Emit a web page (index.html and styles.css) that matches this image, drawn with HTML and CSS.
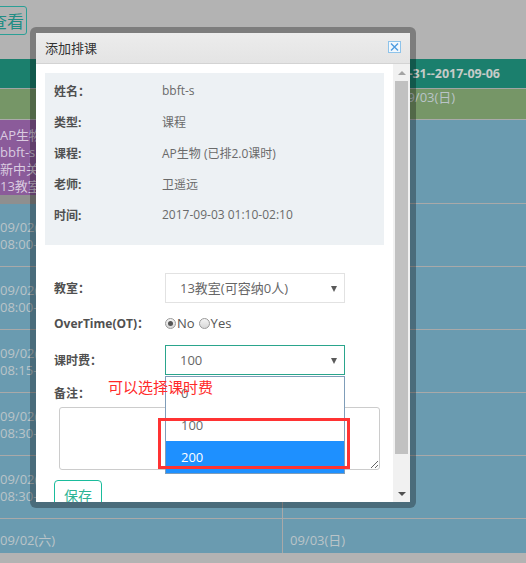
FILE: index.html
```html
<!DOCTYPE html>
<html>
<head>
<meta charset="utf-8">
<link rel="stylesheet" href="styles.css">
</head>
<body>
<div class="page">
  <div class="toolbar"><button class="btn-view">查看</button></div>
  <div class="table">
    <div class="row head"><div class="range">2017-08-31--2017-09-06</div></div>
    <div class="row days"><div class="cell"></div><div class="cell day">09/03(日)</div></div>
    <div class="row r1">
      <div class="cell left">
        <div class="event"><span class="clip">AP生物</span><span class="clip">bbft-s同学</span><span class="clip">新中关村校区</span><span class="clip">13教室</span></div>
      </div>
      <div class="cell right"></div>
    </div>
    <div class="row r"><div class="cell left"><span class="clip">09/02(六)</span><span class="clip">08:00-09:00</span></div><div class="cell right"></div></div>
    <div class="row r"><div class="cell left"><span class="clip">09/02(六)</span><span class="clip">08:00-10:00</span></div><div class="cell right"></div></div>
    <div class="row r"><div class="cell left"><span class="clip">09/02(六)</span><span class="clip">08:15-09:15</span></div><div class="cell right"></div></div>
    <div class="row r"><div class="cell left"><span class="clip">09/02(六)</span><span class="clip">08:30-09:30</span></div><div class="cell right"></div></div>
    <div class="row r"><div class="cell left"><span class="clip">09/02(六)</span><span class="clip">08:30-10:30</span></div><div class="cell right"></div></div>
    <div class="row rl"><div class="cell left">09/02(六)</div><div class="cell right">09/03(日)</div></div>
  </div>
</div>

<div class="modal">
  <div class="modal-title">
    <span>添加排课</span>
    <span class="close"><svg width="9" height="8" viewBox="0 0 9 8"><path d="M1 0.5L8 7.5M8 0.5L1 7.5" stroke="#4d9be0" stroke-width="1.4" fill="none"/></svg></span>
  </div>
  <div class="modal-body">
    <div class="content">
      <div class="info">
        <div class="info-row"><span class="lbl">姓名：</span><span class="val">bbft-s</span></div>
        <div class="info-row"><span class="lbl">类型:</span><span class="val">课程</span></div>
        <div class="info-row"><span class="lbl">课程:</span><span class="val">AP生物 (已排2.0课时)</span></div>
        <div class="info-row"><span class="lbl">老师:</span><span class="val">卫遥远</span></div>
        <div class="info-row"><span class="lbl">时间:</span><span class="val">2017-09-03 01:10-02:10</span></div>
      </div>
      <div class="form">
        <div class="f-row sel-row"><span class="lbl flbl">教室：</span><div class="select">13教室(可容纳0人)<i class="arrow"></i></div></div>
        <div class="f-row ot-row"><span class="lbl flbl">OverTime(OT)：</span>
          <span class="radio on"></span><span class="rtxt">No</span><span class="radio"></span><span class="rtxt">Yes</span>
        </div>
        <div class="f-row sel-row fee"><span class="lbl flbl">课时费：</span>
          <div class="select focus">100<i class="arrow"></i>
            <div class="dropdown">
              <div class="opt">0</div>
              <div class="opt">100</div>
              <div class="opt hl">200</div>
            </div>
          </div>
        </div>
        <div class="f-row note-row"><span class="lbl flbl">备注：</span></div>
        <textarea class="note"></textarea>
        <button class="save">保存</button>
      </div>
      <div class="annot">可以选择课时费</div>
      <div class="redbox"></div>
    </div>
    <div class="scrollbar">
      <div class="sb-btn"><i class="tri-up"></i></div>
      <div class="sb-track"><div class="sb-thumb"></div></div>
      <div class="sb-btn"><i class="tri-down"></i></div>
    </div>
  </div>
</div>
</body>
</html>
```

FILE: styles.css
```css
* { box-sizing: border-box; }
html, body { margin: 0; padding: 0; }
body {
  width: 526px;
  height: 563px;
  overflow: hidden;
  background: #b3b3b3;
  font-family: "Open Sans", "Noto Sans CJK SC", sans-serif;
  position: relative;
}

/* background page */
.toolbar { height: 59px; padding-top: 6px; }
.btn-view {
  margin-left: -13px;
  height: 29px;
  padding: 0 2px;
  border: 1px solid #2a9f96;
  border-radius: 3px;
  background: transparent;
  color: #1f8d84;
  font: 17px/27px "Noto Sans CJK SC", sans-serif;
}
.table { height: 494px; overflow: hidden; }
.row { display: grid; grid-template-columns: 282px 1fr; }
.head {
  display: block;
  height: 30px;
  background: #1b7f6d;
  border-bottom: 1px solid #a0a6a4;
}
.range {
  text-align: right;
  padding-right: 26px;
  font-weight: bold;
  font-size: 12.5px;
  line-height: 29px;
  color: #c6cbc8;
}
.days {
  height: 31px;
  background: #769667;
  border-bottom: 1px solid #aaaaaa;
}
.day {
  padding-left: 118px;
  font-size: 14px;
  line-height: 34px;
  color: #2e3a2b;
}
.cell { font-size: 13px; line-height: 17px; color: #bac4c8; }
.clip { display: block; width: 36px; overflow: hidden; white-space: nowrap; }
.r1 { height: 84px; }
.r1 .left { background: #8f8f8f; }
.r1 .right { background: #6a9bb0; border-left: 1px solid #a9a9a9; border-bottom: 1px solid #a9a9a9; }
.event {
  height: 75px;
  background: #8b5b9a;
  color: #dacbe0;
  padding-top: 7px;
}
.r, .rl { background: #6a9bb0; }
.r { height: 63px; }
.r .cell, .rl .cell { white-space: nowrap; overflow: hidden; }
.r .left { padding-top: 15px; border-bottom: 1px solid #a9a9a9; }
.r .right { border-left: 1px solid #a9a9a9; border-bottom: 1px solid #a9a9a9; }
.rl { height: 34px; }
.rl .left { padding-top: 13px; }
.rl .right { padding-top: 13px; padding-left: 7px; border-left: 1px solid #a9a9a9; }

/* modal */
.modal {
  position: absolute;
  left: 30px;
  top: 27px;
  width: 386px;
  height: 481px;
  border: 6px solid rgba(0, 0, 0, 0.3);
  border-radius: 6px;
  background: #fff;
  background-clip: padding-box;
  display: flex;
  flex-direction: column;
}
.modal-title {
  flex: none;
  height: 31px;
  background: linear-gradient(#ececec, #e4e4e4);
  border-bottom: 1px solid #d3d3d3;
  display: flex;
  align-items: center;
  justify-content: space-between;
  padding: 0 9px 0 9px;
  font-size: 13px;
  color: #333;
}
.modal-title span:first-child { margin-top: -2px; }
.close {
  width: 13px;
  height: 12px;
  border: 1px solid #8ec3ea;
  background: #f2f8fd;
  display: flex;
  align-items: center;
  justify-content: center;
  margin-top: -3px;
}
.close svg { display: block; }
.modal-body { flex: 1; display: flex; overflow: hidden; }
.content {
  flex: 1;
  padding: 9px 9px 0 9px;
  overflow: hidden;
  position: relative;
}

.info {
  background: #edf1f4;
  padding: 2px 9px 15px;
}
.info-row { height: 31px; display: flex; align-items: center; }
.lbl { font-weight: bold; font-size: 12px; color: #505050; }
.info .lbl { width: 108px; }
.val { font-size: 12px; color: #6a6a6a; }

.form { padding: 28px 0 0 9px; }
.f-row { display: flex; align-items: center; }
.flbl { width: 111px; }
.sel-row { height: 30px; margin-bottom: 10px; }
.ot-row { height: 20px; margin-bottom: 12px; }
.fee { margin-bottom: 8px; }
.select {
  position: relative;
  width: 180px;
  height: 30px;
  border: 1px solid #e2e2e2;
  padding-left: 14px;
  font-size: 13px;
  line-height: 28px;
  color: #666;
}
.select.focus { border-color: #2aa58c; }
.arrow {
  position: absolute;
  right: 7px;
  top: 12px;
  width: 0;
  height: 0;
  border-left: 3.5px solid transparent;
  border-right: 3.5px solid transparent;
  border-top: 6px solid #5a5a5a;
}
.radio {
  width: 11px;
  height: 11px;
  border-radius: 50%;
  border: 1px solid #9a9a9a;
  background: linear-gradient(#f4f4f4, #d8d8d8);
  position: relative;
}
.radio.on::after {
  content: "";
  position: absolute;
  left: 2px;
  top: 2px;
  width: 5px;
  height: 5px;
  border-radius: 50%;
  background: #555;
}
.rtxt { font-size: 13px; color: #555; margin: 0 4px 0 1px; }
.note-row { height: 20px; }
.note {
  display: block;
  margin: 4px 0 0 5px;
  width: 321px;
  height: 63px;
  border: 1px solid #cccccc;
  border-radius: 3px;
  resize: both;
  background: #fff;
}
.save {
  display: block;
  margin-top: 10px;
  width: 48px;
  height: 30px;
  border: 1px solid #1abc9c;
  border-radius: 4px;
  background: #fff;
  color: #2db395;
  font: 14px/28px "Noto Sans CJK SC", sans-serif;
  padding: 0;
}

.dropdown {
  position: absolute;
  left: -1px;
  top: 30px;
  width: 180px;
  border: 1px solid #7f9db9;
  background: #fff;
  z-index: 2;
}
.opt {
  height: 32px;
  line-height: 32px;
  padding-left: 15px;
  font-size: 13px;
  color: #6a6a6a;
}
.opt.hl { background: #1e90ff; color: #fff; }

.annot {
  position: absolute;
  left: 72px;
  top: 313px;
  font: 15px/20px "Noto Sans CJK SC", sans-serif;
  color: #ff2a2a;
  z-index: 3;
}
.redbox {
  position: absolute;
  left: 122px;
  top: 354px;
  width: 192px;
  height: 51px;
  border: 3px solid #ff3333;
  z-index: 3;
}

/* scrollbar */
.scrollbar {
  flex: none;
  width: 17px;
  background: #f1f1f1;
  display: flex;
  flex-direction: column;
}
.sb-btn { height: 17px; display: flex; align-items: center; justify-content: center; }
.sb-track { flex: 1; padding: 0 2px; }
.sb-thumb { height: 373px; background: #c1c1c1; }
.tri-up {
  width: 0; height: 0;
  border-left: 4px solid transparent;
  border-right: 4px solid transparent;
  border-bottom: 4px solid #a3a3a3;
}
.tri-down {
  width: 0; height: 0;
  border-left: 4px solid transparent;
  border-right: 4px solid transparent;
  border-top: 4px solid #505050;
}
```
